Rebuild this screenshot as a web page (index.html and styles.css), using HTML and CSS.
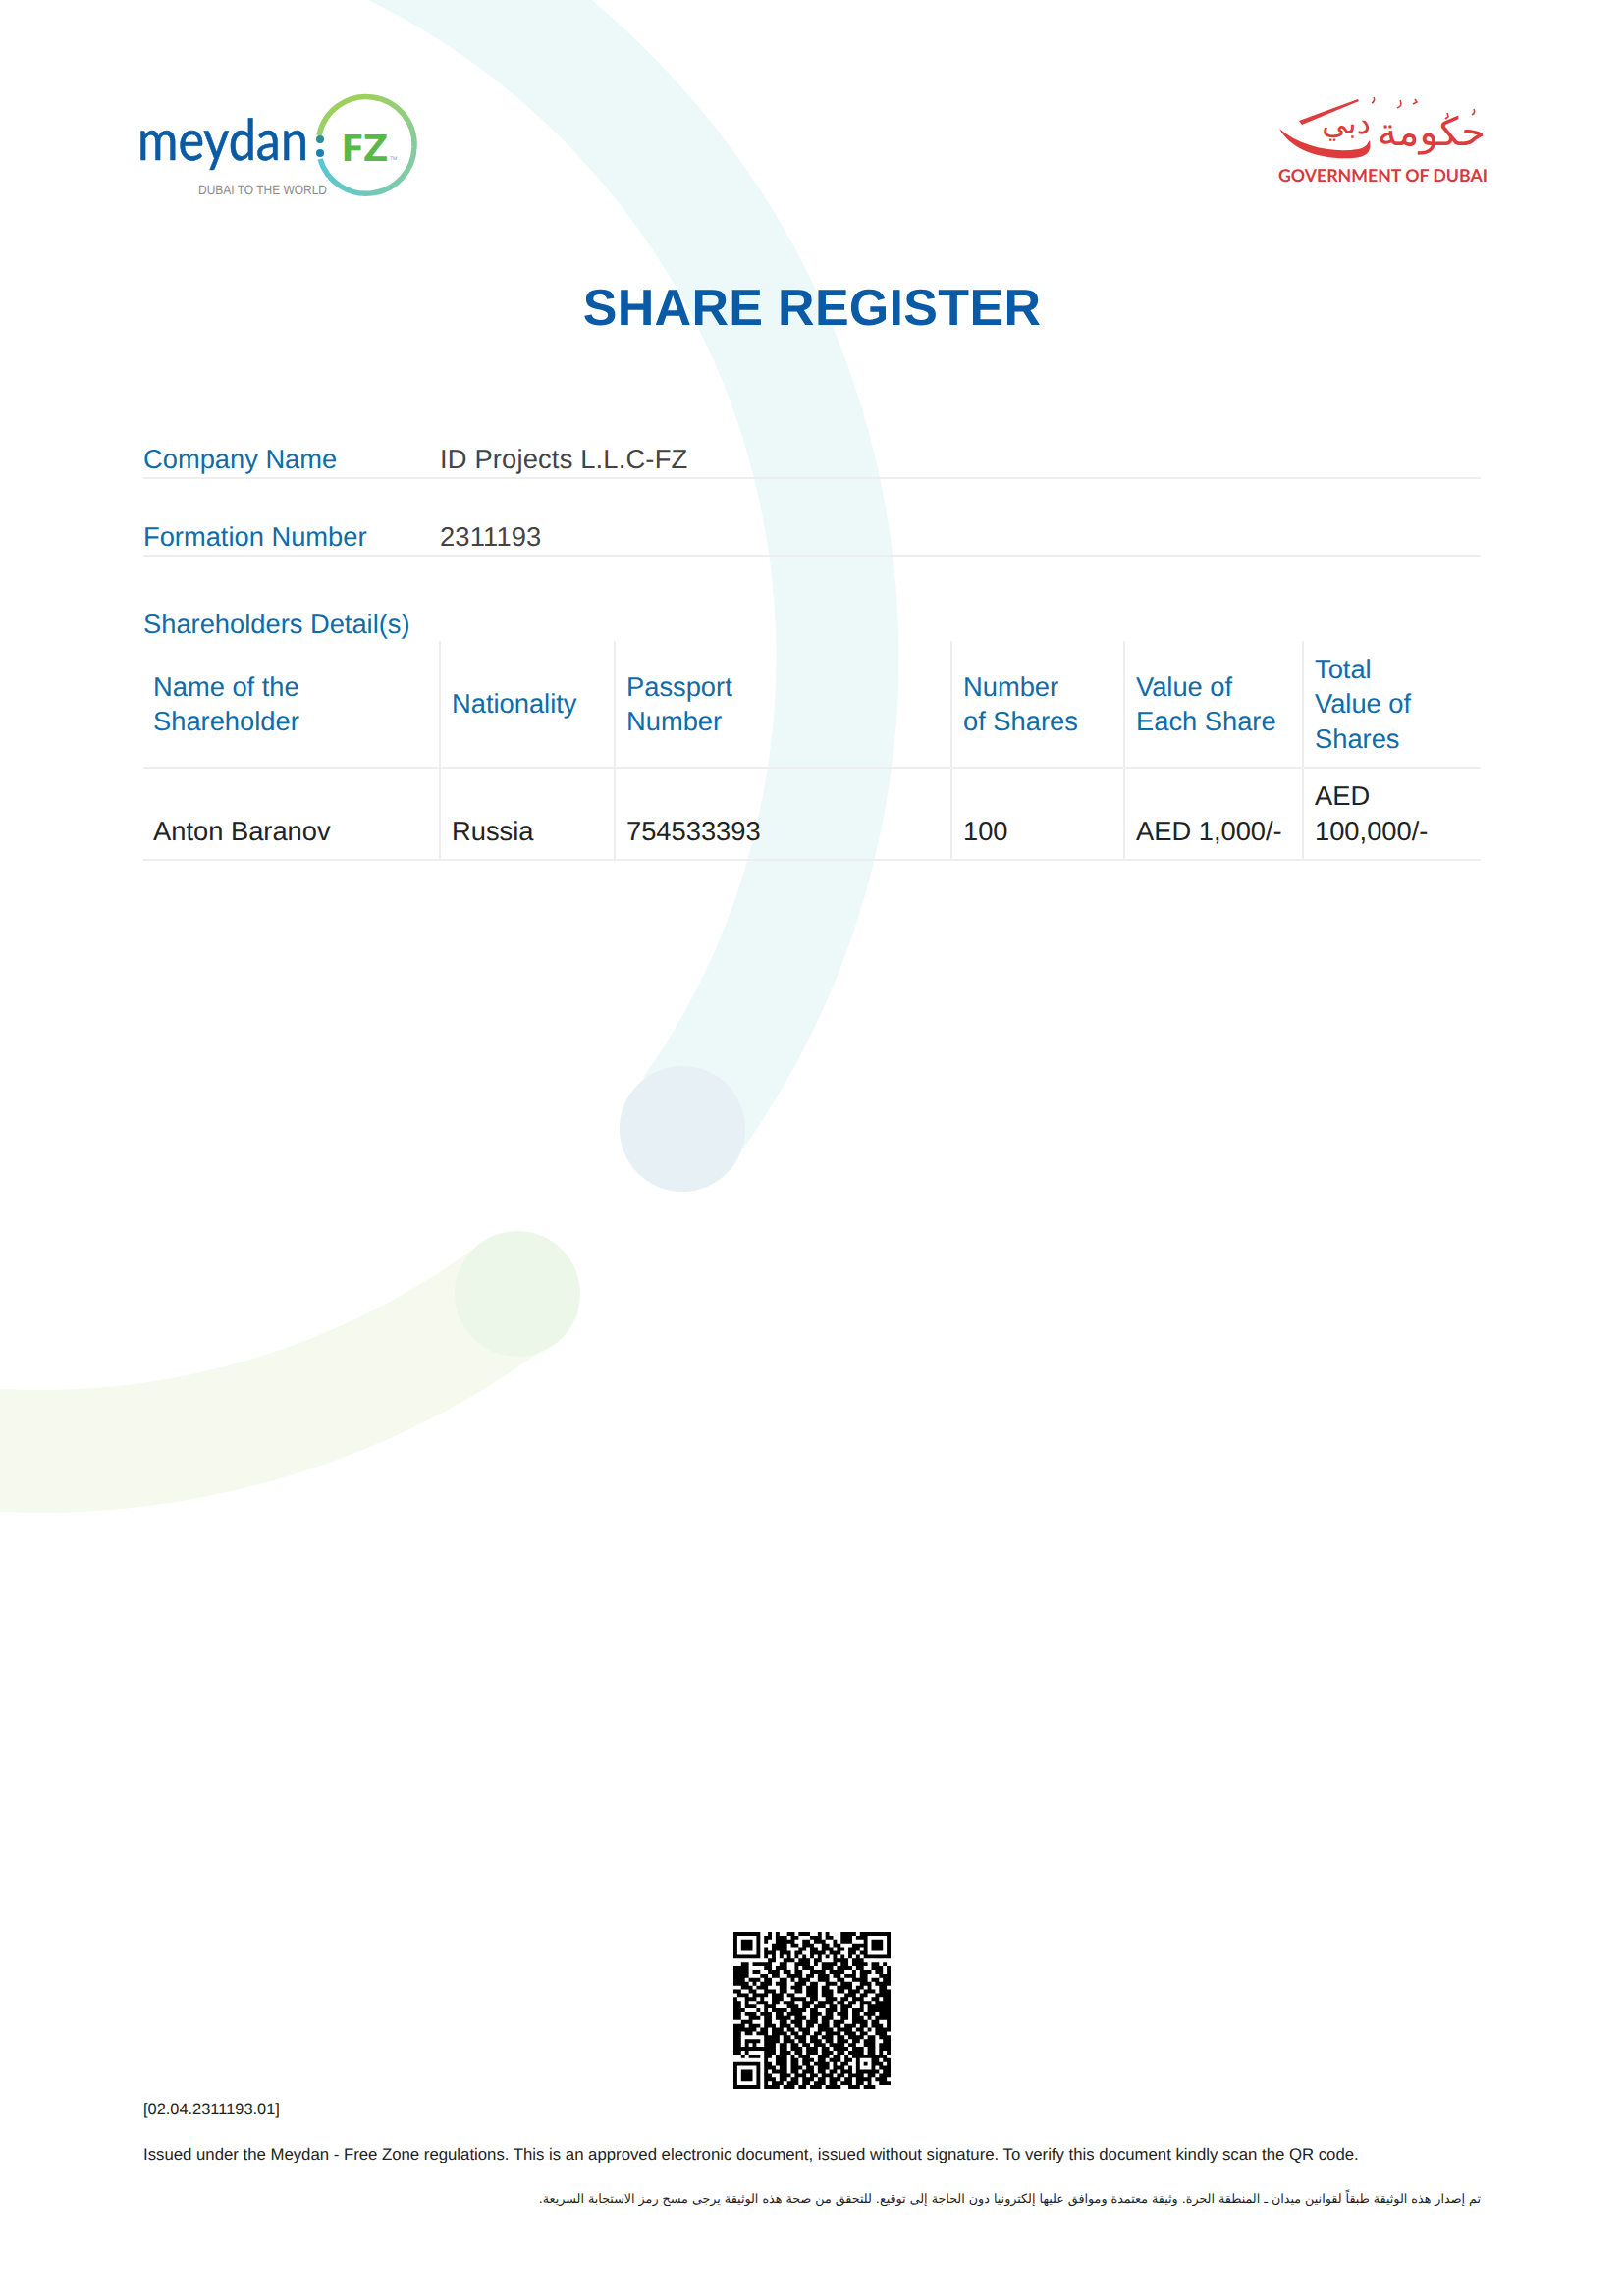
FILE: index.html
```html
<!DOCTYPE html>
<html lang="en">
<head>
<meta charset="utf-8">
<title>Share Register</title>
<link rel="stylesheet" href="styles.css">
</head>
<body>
<main class="page">
  <svg class="watermark" viewBox="0 0 1654 2339" aria-hidden="true">
    <path class="arc-cyan" d="M373 -70A809 809 0 0 1 706 1134"/>
    <path class="arc-green" d="M-20 1476A809 809 0 0 0 517 1324"/>
    <circle class="dot-blue" cx="695" cy="1150" r="64"/>
    <circle class="dot-green" cx="527" cy="1318" r="64"/>
  </svg>

  <header class="header">
    <svg class="logo-meydan" viewBox="140 90 290 120" role="img" aria-label="Meydan FZ">
      <defs>
        <linearGradient id="ringTop" x1="0" y1="0" x2="1" y2="1">
          <stop offset="0" stop-color="#a3d14b"/>
          <stop offset="1" stop-color="#86cba0"/>
        </linearGradient>
        <linearGradient id="ringBottom" x1="0" y1="0" x2="1" y2="0">
          <stop offset="0" stop-color="#58c7d3"/>
          <stop offset="1" stop-color="#86cba0"/>
        </linearGradient>
      </defs>
      <path class="ring" stroke="url(#ringTop)" d="M325 138A49 49 0 0 1 422 150"/>
      <path class="ring" stroke="url(#ringBottom)" d="M326 162A49 49 0 0 0 422 150"/>
      <circle class="colon-a" cx="326" cy="142" r="4"/>
      <circle class="colon-b" cx="326" cy="156" r="4"/>
      <text class="meydan-word" x="140" y="163" textLength="174" lengthAdjust="spacingAndGlyphs">meydan</text>
      <text class="meydan-fz" x="347" y="164" textLength="48" lengthAdjust="spacingAndGlyphs">FZ</text>
      <text class="meydan-tm" x="397" y="163">TM</text>
      <text class="meydan-tag" x="202" y="198" textLength="131" lengthAdjust="spacingAndGlyphs">DUBAI TO THE WORLD</text>
    </svg>
    <svg class="logo-gov" viewBox="1295 90 220 100" role="img" aria-label="Government of Dubai">
      <path class="gov-fill" d="M1303 131C1325 150 1358 156 1383 152C1393 150 1392 146 1395 143C1397 155 1392 160 1378 161C1345 163 1315 153 1303 131Z"/>
      <path class="gov-fill" d="M1323 123L1383 101L1384 103L1326 127Z"/>
      <path class="gov-stroke" d="M1397 105q4 -2 2 -6M1423 110q6 -2 3 -8M1439 106l4 -2l-2 -3M1472 121l3 -2l-1 -4M1499 117q4 -2 2 -6"/>
      <text class="gov-word-a" x="1513" y="148">حكومة</text>
      <text class="gov-word-b" x="1396" y="136">دبي</text>
      <text class="gov-name" x="1302" y="185" textLength="213" lengthAdjust="spacingAndGlyphs">GOVERNMENT OF DUBAI</text>
    </svg>
  </header>

  <h1 class="title">SHARE REGISTER</h1>

  <section class="details">
    <div class="detail-row">
      <span class="detail-label">Company Name</span>
      <span class="detail-value">ID Projects L.L.C-FZ</span>
    </div>
    <div class="detail-row">
      <span class="detail-label">Formation Number</span>
      <span class="detail-value">2311193</span>
    </div>
  </section>

  <h2 class="section-title">Shareholders Detail(s)</h2>
  <table class="shares">
    <colgroup>
      <col class="c-name"><col class="c-nat"><col class="c-pass"><col class="c-num"><col class="c-val"><col class="c-total">
    </colgroup>
    <thead>
      <tr>
        <th>Name of the<br>Shareholder</th>
        <th>Nationality</th>
        <th>Passport<br>Number</th>
        <th>Number<br>of Shares</th>
        <th>Value of<br>Each Share</th>
        <th>Total<br>Value of<br>Shares</th>
      </tr>
    </thead>
    <tbody>
      <tr>
        <td>Anton Baranov</td>
        <td>Russia</td>
        <td>754533393</td>
        <td>100</td>
        <td>AED 1,000/-</td>
        <td>AED<br>100,000/-</td>
      </tr>
    </tbody>
  </table>

  <footer class="footer">
    <div class="qr-wrap"><svg id="qr" class="qr" viewBox="0 0 41 41" role="img" aria-label="QR code"></svg></div>
    <p class="ref">[02.04.2311193.01]</p>
    <p class="note">Issued under the Meydan - Free Zone regulations. This is an approved electronic document, issued without signature. To verify this document kindly scan the QR code.</p>
    <p class="note-ar" dir="rtl" lang="ar">تم إصدار هذه الوثيقة طبقاً لقوانين ميدان ـ المنطقة الحرة. وثيقة معتمدة وموافق عليها إلكترونيا دون الحاجة إلى توقيع. للتحقق من صحة هذه الوثيقة يرجى مسح رمز الاستجابة السريعة.</p>
  </footer>
</main>
<script src="qr.js"></script>
</body>
</html>
```

FILE: styles.css
```css
* { box-sizing: border-box; }
html, body { margin: 0; padding: 0; background: #fff; }
body { font-family: "Liberation Sans", Arial, sans-serif; text-rendering: geometricPrecision; }

.page {
  position: relative;
  width: 1654px;
  height: 2339px;
  padding: 90px 146px 0;
  display: flex;
  flex-direction: column;
  overflow: hidden;
}
.page > *:not(.watermark) { position: relative; }

.watermark { position: absolute; left: 0; top: 0; width: 1654px; height: 2339px; }
.arc-cyan, .arc-green { fill: none; stroke-width: 125; }
.arc-cyan { stroke: #edf9f9; }
.arc-green { stroke: #f6faee; }
.dot-blue { fill: #e6f0f5; }
.dot-green { fill: #ecf7ea; }

.header { display: flex; justify-content: space-between; align-items: flex-start; height: 120px; }
.logo-meydan { width: 290px; height: 120px; margin-left: -6px; }
.logo-gov { width: 220px; height: 100px; margin-right: -7px; }

.ring { fill: none; stroke-width: 5.5; }
.colon-a { fill: #2b8f93; }
.colon-b { fill: #1f7fb0; }
.meydan-word { font-family: Lato, sans-serif; font-size: 58px; fill: #0b5ba4; stroke: #0b5ba4; stroke-width: .6px; }
.meydan-fz { font-family: "Open Sans", sans-serif; font-weight: 700; font-size: 38px; fill: #58b947; }
.meydan-tm { font-family: "Liberation Sans", sans-serif; font-size: 5px; fill: #6d9fc0; }
.meydan-tag { font-family: "Liberation Sans", sans-serif; font-size: 13.5px; fill: #8b8b8b; }

.gov-fill { fill: #de3b3d; }
.gov-stroke { fill: none; stroke: #de3b3d; stroke-width: 1.6; }
.gov-word-a, .gov-word-b { font-family: "DejaVu Sans", sans-serif; fill: #de3b3d; direction: rtl; }
.gov-word-a { font-size: 40px; }
.gov-word-b { font-size: 32px; }
.gov-name { font-family: Lato, sans-serif; font-weight: 700; font-size: 17.5px; fill: #d8393b; }

.title {
  margin: 74px 0 0;
  text-align: center;
  font-size: 52px;
  line-height: 60px;
  font-weight: 700;
  letter-spacing: .3px;
  color: #0a5aa5;
}

.details { margin-top: 106px; }
.detail-row {
  display: flex;
  height: 38px;
  margin-bottom: 41px;
  border-bottom: 2px solid #eeeeee;
  font-size: 27.3px;
  line-height: 36px;
}
.detail-label { width: 302px; color: #0e6ca8; }
.detail-value { color: #444; letter-spacing: .18px; }

.section-title {
  margin: 10px 0 -1px;
  font-size: 27.3px;
  line-height: 36px;
  font-weight: 400;
  color: #0e6ca8;
}

.shares { width: 1362px; table-layout: fixed; border-collapse: collapse; font-size: 27.3px; line-height: 35.5px; }
.c-name { width: 302px; }
.c-nat { width: 178px; }
.c-pass { width: 343px; }
.c-num { width: 176px; }
.c-val { width: 182px; }
.c-total { width: 181px; }
.shares th, .shares td { text-align: left; padding: 0 0 0 11px; border-left: 2px solid #eeeeee; border-bottom: 2px solid #eeeeee; }
.shares th:first-child, .shares td:first-child { border-left: 0; padding-left: 10px; }
.shares th { height: 129px; font-weight: 400; color: #0e6ca8; vertical-align: middle; }
.shares td { height: 94px; color: #222; vertical-align: bottom; padding-bottom: 11px; }

.footer { margin-top: auto; padding-bottom: 90px; }
.qr-wrap { display: flex; justify-content: center; }
.qr { width: 160px; height: 160px; display: block; }
.qr-mod { fill: #000; }
.ref, .note { margin: 0; line-height: 18px; color: #222; }
.ref { margin-top: 12px; font-size: 16.4px; }
.note { margin-top: 28px; font-size: 16.75px; }
.note-ar { margin: 27px 0 0; font-family: "DejaVu Sans", sans-serif; font-size: 12.7px; line-height: 18px; color: #222; text-align: right; }
```

FILE: qr.js
```js
(function () {
  var rows = [
    ".........#.#..##.###..#.#...####.#.......",
    "........##.###.##...###.##..###.##.......",
    "........#..#####..##.###..#.###...#......",
    "..........####.##.###..##.##...###.......",
    "........#.####...##.##.###.##.###.#......",
    "........###.###.##..####.###..##.#.......",
    "........#.#.#.#.#.#.#.#.#.#.#.#..........",
    ".........##..###.###.##...####.###.......",
    "..##.#.###..##..####.#.####.##.####.##.#.",
    "####..#.##.###..#.###..###.####.##..###.#",
    "####.##..###.##.##..####.####..#.###.##.#",
    "####..###.##..####.##.###.##.###.##...###",
    "###.###.##..##.#.###..###..##..####.##.##",
    "####.#.###.###..###.##..###.###..###.####",
    "..###.###...##.###.###.##..####.##.#..##.",
    "##..##..###.##..##.###.###.##.###.###.###",
    ".###.#.##.###.##...###.###...###.##..####",
    "#..#####..###..####.##..###.##.###..##.##",
    "##.#..###.##.###..###.####.##.##.###.####",
    "##.####.###...###.##.###.##.###..#.######",
    "###...#.#.####.####.##..###.##.###.######",
    "##.###.###.##.####..###.##.###.##.###.###",
    "##..###.##.####.###.##.###..##.###.#.####",
    "..###.#.##..##.###.###.##.###..####.##..#",
    "###.##..###.###.##.##.###.##.###.##.###.#",
    "#########.###.##.###..####.####.##.#.####",
    "##.##.###.####.##.##.##.####.###.##..###.",
    "##....#.####.##.###.##.###.##.####.##.###",
    "##.###..####.###.##.###.##.###.##.###..##",
    "##.#.##.###.##.##.##.###.####.##..###.###",
    "######.####.##.###.###.##.####.###.##.###",
    "##.#..#.###.###.##.###.###.##.####.##.#.#",
    "..#.###.##.###.#.###..###.##.#.#####.###.",
    "........#..###.##.###.##.###.##.....##.##",
    "........##.###.##.##.####.#.##......###.#",
    "........###.##.###.##.###.###.#.....#.###",
    "........#.####.##.###.##.##.###.....##.##",
    "........##..###.###.##.###.##.####.##.###",
    "........###.##.##.###.##.###.##.####.###.",
    "........#.###.###.##.###.##.###.##.#..###",
    "........####.###.##.###.####..###.###...."
  ];
  var SIZE = 41;
  var grid = rows.map(function (r) { return r.split("").map(function (c) { return c === "#"; }); });

  function square(x, y, s, on) {
    for (var j = 0; j < s; j++) for (var i = 0; i < s; i++) {
      if (grid[y + j] && x + i < SIZE) grid[y + j][x + i] = on;
    }
  }
  function finder(x, y) {
    square(x, y, 7, true); square(x + 1, y + 1, 5, false); square(x + 2, y + 2, 3, true);
  }
  [[0, 0], [34, 0], [0, 34]].forEach(function (p) { finder(p[0], p[1]); });
  square(32, 32, 5, true); square(33, 33, 3, false); square(34, 34, 1, true);
  for (var t = 8; t < 33; t++) { grid[6][t] = t % 2 === 0; grid[t][6] = t % 2 === 0; }

  var d = "";
  grid.forEach(function (row, y) {
    var x = 0;
    while (x < SIZE) {
      if (row[x]) {
        var s = x;
        while (x < SIZE && row[x]) x++;
        d += "M" + s + " " + y + "h" + (x - s) + "v1h-" + (x - s) + "z";
      } else { x++; }
    }
  });
  var path = document.createElementNS("http://www.w3.org/2000/svg", "path");
  path.setAttribute("class", "qr-mod");
  path.setAttribute("d", d);
  document.getElementById("qr").appendChild(path);
})();
```
